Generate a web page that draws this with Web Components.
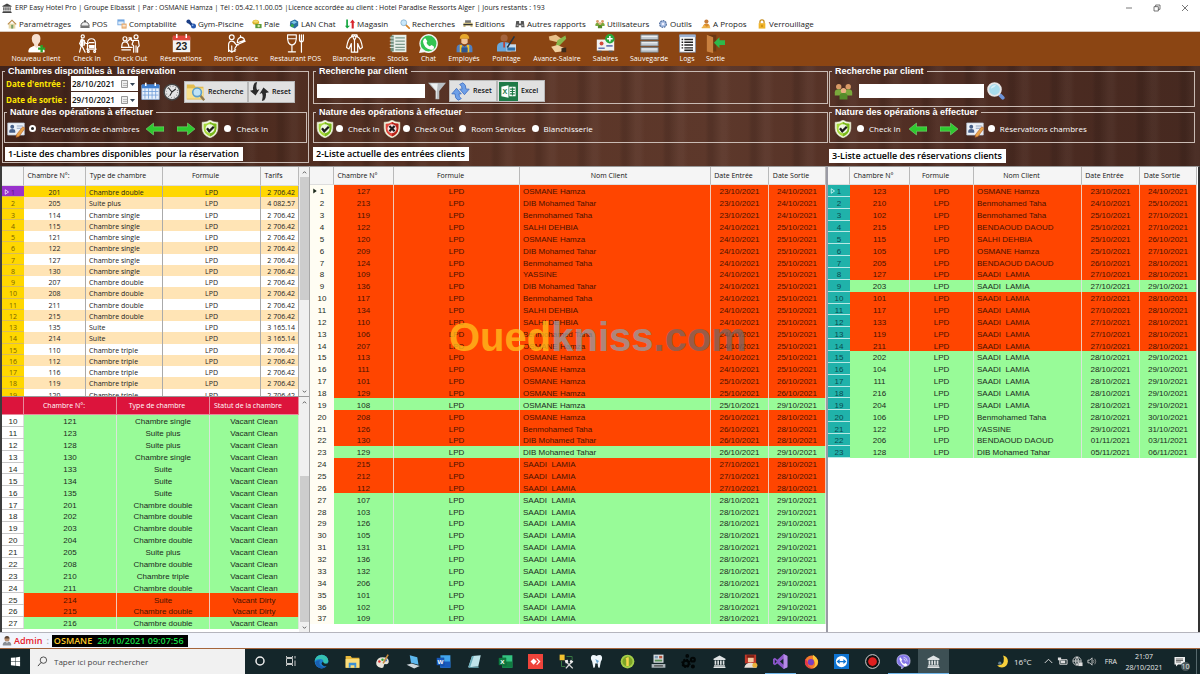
<!DOCTYPE html>
<html lang="fr">
<head>
<meta charset="utf-8">
<title>ERP Easy Hotel Pro</title>
<style>
html,body{margin:0;padding:0}
body{font:8px/12px "Open Sans","Noto Sans",sans-serif;color:#222;background:#fff}
</style>
</head>
<body>
<hotel-app></hotel-app>
<script>
const BASE = `<style>
*{box-sizing:border-box}
button{font:inherit;color:inherit;background:none;border:0;padding:0;margin:0}
input{font:inherit;color:inherit;margin:0}
</style>`;
function define(name, html, setup){
  customElements.define(name, class extends HTMLElement{
    connectedCallback(){
      if(this.shadowRoot) return;
      const r = this.attachShadow({mode:'open'});
      r.innerHTML = BASE + (typeof html === 'function' ? html(this) : html);
      if(setup) setup(this, r);
    }
  });
}

/* ---------- icons, 24 x 24 grid ---------- */
const bust = (x,y,c,h) => `<circle cx="${x}" cy="${y}" r="3.4" fill="${h}"/><path fill="${c}" d="M${x-5} ${y+11}v-4q0-4 5-4t5 4v4z"/>`;
const bank = c => `<path fill="${c}" d="M12 1 23 7v2H1V7zM3 10h3v8H3zM8 10h3v8H8zM13 10h3v8h-3zM18 10h3v8h-3zM2 19h20v2H2zM1 21.500h22V24H1z"/>`;
const line = 'fill="none" stroke="#fff" stroke-width="1.500" stroke-linecap="round" stroke-linejoin="round"';
const shield = (c1,c2,mark) => `<path fill="#f4f7e4" stroke="#d9e0c0" stroke-width=".7" d="M12 0q5 3.500 10.500 3v8q0 9-10.500 13Q1.500 20 1.500 11V3Q7 3.500 12 0z"/><path fill="${c1}" d="M12 2.500q4 2.500 8.500 2.500v6q0 7.500-8.500 11-8.500-3.500-8.500-11V5Q8 5 12 2.500z"/><path fill="${c2}" d="M12 2.500q4 2.500 8.500 2.500v6q0 7.500-8.500 11z"/><circle cx="12" cy="11.500" r="6" fill="#fff" opacity=".85"/>${mark}`;
const office = (c1,c2,l) => `<path fill="${c1}" d="M7 2h16v20H7z"/><path fill="${c2}" d="M7 12h16v10H7z"/><path fill="${c2}" stroke="#0003" d="M1 6h12v12H1z"/><text x="7" y="15.500" font-size="10" font-weight="700" text-anchor="middle" fill="#fff" font-family="Liberation Sans">${l}</text>`;
const ICONS = {
  bank: bank('#444'), bankW: bank('#dfe3e4'),
  home:`<path fill="#e8d9a8" d="M4 11h16v12H4z"/><path fill="#b98a4a" d="M12 1 1 12l2 2 9-9 9 9 2-2z"/><path fill="#7aa06a" d="M10 14h5v9h-5z"/>`,
  bell:`<path fill="#eee" stroke="#444" stroke-width="2" d="M2 17q1-10 10-10t10 10z"/><path fill="#444" d="M1 18h22v3H1zM10 3h4v4h-4z"/>`,
  compta:`<path fill="#6fa4e0" d="M1 1h17v14H1z"/><path fill="#dcebfa" d="M3 6h13v7H3z"/><path fill="#e7a25c" d="M11 11h12v12H11z"/><path fill="#fff" d="M13 14h8v2h-8zM13 18h8v2h-8z"/>`,
  gym:`<path stroke="#1c3f86" stroke-width="6" d="m6 6 12 12"/><circle cx="6" cy="6" r="5" fill="#1c3f86"/><circle cx="18" cy="17" r="6" fill="#2858ae"/><circle cx="16" cy="15" r="2" fill="#9fc0f0"/>`,
  paie:`<ellipse cx="9" cy="8" rx="8" ry="6" fill="#d8b22b"/><ellipse cx="9" cy="6" rx="6" ry="3" fill="#f4dc6b"/><path fill="#5c9a38" d="M8 12h15v10H8z"/><circle cx="16" cy="17" r="3" fill="#cfe7a8"/>`,
  lan:`<path fill="#2d6fa0" d="M3 6 14 1l8 5v10l-8 7L2 17z"/><path fill="#7ec8e8" d="m5 8 8-4 6 4-7 4z"/><circle cx="8" cy="16" r="4" fill="#38a94a"/>`,
  magasin:`<path fill="#12a53e" d="M7 1v15h5l-7 7-5-7h3V1z"/><path fill="#d8242c" d="M16 23V9h-4l6-8 6 8h-3v14z"/>`,
  loupe:`<path stroke="#d88428" stroke-width="4" stroke-linecap="round" d="m14 14 8 8"/><circle cx="9" cy="9" r="7" fill="#c9e8fb" stroke="#8ab2cf" stroke-width="2"/>`,
  printer:`<path fill="#777" d="M5 3h14v7H5z"/><path fill="#c9b97a" d="M1 9h22v10H1z"/><path fill="#333" d="M1 12h22v3H1z"/><path fill="#fff" d="M6 16h12v6H6z"/>`,
  rapports:`<path fill="#555" d="M3 5h7v6h4V5h7l2 15h-8v-5H9v5H1z"/><path fill="#aaa" d="M4 13h4v4H4zM16 13h4v4h-4z"/>`,
  users:bust(6,6,'#7aa83c','#d99a66')+bust(18,6,'#7aa83c','#d99a66')+bust(12,11,'#548c2a','#e8b080'),
  gear:`<circle cx="12" cy="12" r="8" fill="#8fa9d6" stroke="#54709f" stroke-width="3" stroke-dasharray="4 2"/><circle cx="12" cy="12" r="6" fill="#a9bfe2"/><circle cx="12" cy="12" r="3" fill="#eef"/>`,
  about:`<circle cx="13" cy="6" r="5" fill="#c67c3a"/><path fill="#d98a2b" d="M5 20q0-9 8-9t8 9z"/><path fill="#edb24a" d="M1 21 8 14l6 5 4-4 5 7H2z"/>`,
  lock:`<path fill="none" stroke="#c48a1a" stroke-width="3" d="M7 11V7q0-5 5-5t5 5v4"/><path fill="#f0b429" d="M4 10h16v13H4z"/><path fill="#a86c00" d="M11 14h2v5h-2z"/>`,
  newclient:`<path fill="#f6dfcf" d="M12 0q5 0 5 6 0 5-3 7v2q8 2 8 6v2H2v-2q0-4 7-6v-2Q6 11 6 6q0-6 6-6z"/><path fill="#fff" d="M2 23v-2q0-4 7-6l3 3 3-3q7 2 7 6v2z"/><path fill="#28a528" d="M17 14h3v3h3v3h-3v3h-3v-3h-3v-3h3z"/>`,
  checkin:`<g ${line}><circle cx="6" cy="3" r="2"/><path d="M5 6 2 12l2 3-2 8M5 15l4 8M6 7l4 5h3M8 8v6M12 20V12q0-6 5-6t5 6v8M11 19h12M14 15h6M14 11h6"/><circle cx="13" cy="22" r="1.200"/><circle cx="21" cy="22" r="1.200"/></g><path fill="#fff" d="M3 7h4v8H3zM14 14h7v4h-7z"/>`,
  checkout:`<g ${line}><circle cx="5" cy="6" r="2.500"/><circle cx="19" cy="3.500" r="2.500"/><path d="M1 16q0-6 4-6t5 6M0 17h14M16 23v-8l-2-2 2-5h6l1 7-2 2v6M19 15v8M7 10l5-4 3 3M10 5h3v3M1 20h11"/></g>`,
  cal23:`<path fill="#f3f3f3" d="M1 4h22v19H1z"/><path fill="#e2463c" d="M1 2h22v6H1z"/><path fill="#fff" d="M5 0h2v5H5zM17 0h2v5h-2z"/><text x="12" y="20.500" font-size="13" font-weight="700" text-anchor="middle" fill="#222" font-family="Liberation Sans">23</text>`,
  room:`<g ${line}><circle cx="6" cy="4" r="3"/><path d="M2 22v-8q0-5 4-5 3 0 5 4l3 1M6 22v-7M10 22v-4l2-3M12 14l11-5M13 11q0-6 5-7 4 1 4 4zM17 3V2M2 20l4 3 5-3"/></g>`,
  resto:`<g ${line}><path d="M2 1h11q1 12-5.500 13Q1 13 2 1zM7.500 14v8M3 22.500h9M3 6h9M17 1v6q0 3 2.500 3v13M22 1v6q0 3-2.500 3M19.500 1v8"/></g>`,
  laundry:`<g ${line}><path d="M9 1h6l1 3q4 1 6 13l-3 2-3-7v11H8V12l-3 7-3-2Q4 5 8 4zM9 2l3 6 3-6M12 8v14M10 4l2-2 2 2"/></g>`,
  stocks:`<path fill="#e9efe9" d="M4 1h18v22H4z"/><path fill="#6c8d7c" d="M2 2h4v20H2z"/><path stroke="#7c9a8c" stroke-width="1.500" d="M8 5h12M8 9h12M8 13h12M8 17h12M8 20h12"/><path stroke="#fff" stroke-width="1" d="M1 5h5M1 9h5M1 13h5M1 17h5"/>`,
  chat:`<path fill="#f4f4f4" d="M12 0a12 12 0 1 1-5 23L0 24l2-6A12 12 0 0 1 12 0z"/><circle cx="12" cy="12" r="10" fill="#33c452"/><path fill="#fff" d="M8 5.500 10.500 9 9.500 11.500q1.500 3 4 4L16 14l3 2q0 4-4 4Q6 18 5 9q1-3.500 3-3.500z"/>`,
  worker:`<path fill="#e7a72a" d="M6 6q0-6 6-6t6 6z"/><path fill="#efc59a" d="M8 6h8v5q-4 4-8 0z"/><path fill="#4f7fc0" d="M2 23v-5q0-5 6-5l4 3 4-3q6 0 6 5v5z"/><path fill="#f2c12e" d="M6 14h3v9H6zM15 14h3v9h-3z"/><path fill="#2e578f" d="M8 17h8v6H8z"/>`,
  pointage:`<circle cx="9" cy="5" r="4.500" fill="#a4633c"/><path fill="#67a7dc" d="M0 22v-6q0-6 9-6t9 6v6z"/><path fill="#c9dcec" d="M12 13h12v9H12z"/><path fill="#2c6fa8" d="M13 17h10v4H13z"/><path stroke="#234" stroke-width="2" d="M22 3 13 17"/><path fill="#c0392b" d="M8 10h2v7H8z"/>`,
  avance:`<path fill="#e8c08a" d="M1 3 10 1l7 5-6 4-9-2z"/><path fill="#87b84c" d="m12 8 10-6 1 4-9 9-5 2z"/><path fill="#f0d0a0" d="m4 16 8-2 9 4-4 4-8 1z"/><path fill="#3a2a1c" d="m17 18 6-1v6h-6z"/>`,
  salaires:`<path fill="#f2f2f2" d="M1 7h22v14H1z"/><circle cx="7" cy="12" r="2.500" fill="#d24a3c"/><path fill="#6878b8" d="M3 17h8v2H3zM13 14h8v2h-8z"/><path fill="#555" d="M2 21h5v2H2zM16 21h5v2h-5z"/><circle cx="17.500" cy="6" r="6" fill="#2aa83c"/><path fill="#fff" d="M16.500 2.500h2V5h2.500v2h-2.500v2.500h-2V7H14V5h2.500z"/>`,
  save:`<g fill="#c3cbd2" stroke="#6b7780"><path d="M1 1h22v6H1zM1 9h22v6H1zM1 17h22v6H1z"/></g><path stroke="#fff" d="M2 3h20M2 11h20M2 19h20"/>`,
  logs:`<path fill="#fff" stroke="#7b8ca5" d="M2 1h20v22H2z"/><path fill="#9db4d6" d="M2 1h20v3H2z"/><path stroke="#222" stroke-width="1.800" d="M8 7h11M8 10.500h11M8 14h11M8 17.500h11M8 20.500h11"/><path stroke="#222" stroke-width="1.800" d="M4.500 7h2M4.500 10.500h2M4.500 14h2M4.500 17.500h2"/>`,
  exit:`<path fill="#6b3812" d="M1 1h12v21H1z"/><path fill="#c9803e" d="m1 1 8 3v20l-8-2z"/><path fill="#2db84a" d="m10 11 7-7v4h7v6h-7v4z"/>`,
  calendar:`<path fill="#e8f0fb" stroke="#8fb0dc" d="M1 4h22v18H1z"/><path fill="#3f7fd0" d="M1 3h22v5H1z"/><path fill="#fff" d="M5 1h2v4H5zM17 1h2v4h-2z"/><path stroke="#6e9cd8" d="M5 8v13M9.500 8v13M14 8v13M18.500 8v13M2 12h20M2 16.500h20"/>`,
  clock:`<circle cx="12" cy="12" r="10.500" fill="#e4e4e4" stroke="#444" stroke-width="2"/><circle cx="12" cy="12" r="7.500" fill="none" stroke="#777" stroke-width="1.500" stroke-dasharray="1 2.930"/><path fill="none" stroke="#222" stroke-width="1.400" d="m7 6 5 6 5-4M12 12l-3 5"/>`,
  folder:`<path fill="#e3bd4e" d="M1 3h9l2 3h10v16H1z"/><path fill="#f7e08d" d="M1 8h21v13H1z"/><path stroke="#8f7a50" stroke-width="3" d="m18 17 5 6"/><circle cx="14" cy="13" r="5.500" fill="#bfe3f5" stroke="#5b9fcb" stroke-width="2"/>`,
  swap:`<path fill="#2b2b2b" d="M6 1 9 0q-2 7 0 10l3-1-5 8-7-6 4-1Q3 5 6 1zM18 23l-3 1q2-7 0-10l-3 1 5-8 7 6-4 1q1 5-2 9z"/>`,
  sync:`<path fill="#6fa0e8" stroke="#3d6cc0" d="M15 1q4 2 4 8h4l-6 7-6-7h3q0-4-3-6zM9 23q-4-2-4-8H1l6-7 6 7h-3q0 4 3 6z"/>`,
  funnel:`<path fill="#b9bec2" d="M0 1h24l-9 11v11h-5V12z"/><path fill="#eef0f1" d="M3 2h10l-1 9v11h-1V12z"/>`,
  excelb:`<path fill="#1f7a47" d="M0 0h24v24H0z"/><path fill="#fff" d="m3 6 9-2v16l-9-2zM13 6h8v12h-8z"/><text x="7.500" y="15.500" font-size="9" font-weight="700" text-anchor="middle" fill="#1f7a47" font-family="Liberation Sans">X</text><path stroke="#1f7a47" stroke-width="1.500" d="M14 9h6M14 12h6M14 15h6M17 7v10"/>`,
  magnify:`<path stroke="#6d93d8" stroke-width="5" stroke-linecap="round" d="m18 18 3 3"/><circle cx="10" cy="10" r="8.500" fill="#a8dcec" stroke="#e6e6e6" stroke-width="2.500"/><path fill="#fff" opacity=".6" d="M5 9q1-5 7-5-2 4-7 5z"/>`,
  card:`<path fill="#eef2f8" stroke="#bcc8d8" d="M1 4h22v16H1z"/><circle cx="7" cy="9" r="2.600" fill="#48618a"/><path fill="#48618a" d="M3 17v-2q0-3 4-3t4 3v2z"/><path stroke="#8ea4c4" stroke-width="1.500" d="M13 8h8M13 11h6"/><path fill="#e8a54a" stroke="#b05a2a" stroke-width=".8" d="m21 9 3 2-8 11-4 1 1-4z"/>`,
  left:`<path fill="#2fc92f" stroke="#8ff08f" stroke-width=".6" d="M0 12 10 4v5h14v6H10v5z"/>`,
  right:`<path fill="#2fc92f" stroke="#8ff08f" stroke-width=".6" d="M24 12 14 4v5H0v6h14v5z"/>`,
  ok:shield('#a6d83a','#79b81c','<path fill="none" stroke="#1b1b1b" stroke-width="3" d="m8 11 3 4 6-6"/>'),
  no:shield('#e0473c','#b52418','<path fill="none" stroke="#1b1b1b" stroke-width="3" d="m8.500 8 7 7m0-7-7 7"/>'),
  userS:`<circle cx="12" cy="7" r="6" fill="#b98d6a"/><path fill="#5a4636" d="M6 6q0-6 6-6t6 6z"/><path fill="#8a8f96" d="M2 23v-3q0-7 10-7t10 7v3z"/><path fill="#e0e0e0" d="m9 13 3 5 3-5z"/>`,
  win:`<path fill="#fff" d="m2 4 9-1v8.500H2zM12 3l10-1.500v10H12zM2 12.500h9V21l-9-1zM12 12.500h10v10L12 21z"/>`,
  find:`<circle cx="14" cy="9" r="7" fill="none" stroke="#333" stroke-width="1.800"/><path stroke="#333" stroke-width="2" d="m9 14-7 8"/>`,
  ring:`<circle cx="12" cy="12" r="8" fill="none" stroke="#eee" stroke-width="3"/>`,
  task:`<path fill="none" stroke="#ddd" stroke-width="1.800" d="M3 7h12v10H3zM3 2v3h12V2M3 22v-3h12v3M20 2v5M20 11v11"/>`,
  edge:`<circle cx="12" cy="12" r="11" fill="#1b7fd0"/><path fill="#35c1b0" d="M1 11Q3 1 13 1q9 1 10 10-1 5-7 5-3-1-1-4 0-4-5-4-6 0-9 3z"/><path fill="#1a5fb0" d="M2 13q3-4 8-3-3 4 0 8 4 4 10 2-6 5-12 2-5-3-6-9z"/><path fill="#142528" d="M14 12q3 6 10 2l-2 5q-8 2-10-4z"/>`,
  explorer:`<path fill="#e8b93c" d="M1 3h8l2 3h12v16H1z"/><path fill="#fbdd7a" d="M1 8h22v14H1z"/><path fill="#3b8fd4" d="M6 14h12v8h-3v-4H9v4H6z"/>`,
  paint:`<path fill="#e8e4da" d="M12 5q11 0 10 8-1 4-6 3-2 0-2 3 0 4-5 3Q1 20 2 13q2-8 10-8z"/><circle cx="7" cy="12" r="2" fill="#d33"/><circle cx="12" cy="9" r="2" fill="#3a3"/><circle cx="17" cy="10" r="2" fill="#36c"/><path stroke="#c98b3a" stroke-width="2.500" d="m21 1-8 14"/>`,
  pc:`<path fill="#5db8ee" d="m6 2 12 3 2 12-12-3z"/><path fill="#cfd8dc" d="m1 17 8-2 13 4-9 4z"/>`,
  word:office('#41a5ee','#185abd','W'), excel:office('#33c481','#107c41','X'),
  note:`<path fill="#bfe3ea" d="m8 3 14-1-4 18-16 1z"/><path fill="#6fb0bd" d="m2 21 16-1 1 2H4zM8 3l3 0-6 18H2z"/>`,
  anydesk:`<path fill="#ef443b" d="M0 0h24v24H0z"/><path fill="#fff" d="m9 7 5 5-5 5-5-5z"/><path fill="#fff" d="m13 7 2 0 5 5-5 5h-2l4-5z"/>`,
  tools:`<path fill="#f2c230" d="M1 1h8v9H1z"/><path fill="none" stroke="#3a7d44" stroke-width="1.500" d="M4 11v9h6M12 4h9v6"/><path stroke="#d8d8d8" stroke-width="2.200" d="m11 12 11 11M21 12 11 23"/><path fill="#eee" d="m9 10 5-1 1 4-4 2zM19 9l4 3-3 3-3-3z"/>`,
  tooth:`<path fill="#eef6fb" d="M5 2q4-1 7 1 3-2 7-1 4 4 0 10l-2 10q-3 1-3-7h-4q0 8-3 7L5 12Q1 6 5 2z"/><path fill="#6aa5d0" d="m10 8 6 3-3 4z"/>`,
  one:`<circle cx="12" cy="12" r="11" fill="#a5cf4a"/><circle cx="12" cy="12" r="8" fill="#7da428"/><path fill="#f6d64a" d="M9 7l3-2h2v14h-4V9z"/>`,
  server:`<path fill="#d8dde0" d="M4 1h16v13H4z"/><path fill="#7c9ab5" d="M6 3h5v4H6z"/><path fill="#b5543c" d="M13 3h5v4h-5z"/><path fill="#5b8f58" d="M6 9h12v3H6z"/><path fill="#aab3b8" d="M1 16h22v6H1z"/><path fill="#444" d="M5 18h14v2H5z"/>`,
  gears:`<g fill="none" stroke="#020606" stroke-width="3.500"><circle cx="8" cy="15" r="4.500"/><circle cx="8" cy="15" r="6.500" stroke-width="2" stroke-dasharray="2.500 2.600"/><circle cx="19" cy="9" r="3"/><circle cx="10" cy="3" r="1.200"/><circle cx="19" cy="20" r="1.500"/></g>`,
  person:`<path fill="#c0392b" d="M3 1h18v14H3z"/><path fill="#f2c9a0" d="M8 5h9v8H8z"/><path fill="#e8e0d8" d="M2 22q2-8 10-8t10 8z"/><circle cx="19" cy="18" r="4" fill="#e8b23a"/><path fill="#7a1f14" d="M6 2h12v4H6z"/>`,
  vs:`<path fill="#8a55c8" fill-rule="evenodd" d="m17 0 6 3v18l-6 3-10-9-4 3-3-2V8l3-2 4 3zM3 9v6l3-3zM17 7l-6 5 6 5z"/><path fill="#b58ae6" d="m17 0 6 3v18l-6 3z"/>`,
  firefox:`<circle cx="12" cy="13" r="10.500" fill="#f4792b"/><path fill="#fbc63a" d="M14 1q7 4 8.500 11-1 9-9 11 7-6 3-12-3-3-2.500-10z"/><circle cx="11" cy="13" r="5" fill="#7a3fc0"/><path fill="#e5344b" d="M2 7q-2 8 3 13 5 4 10 3-10-2-9-10z"/>`,
  team:`<path fill="#0e74d2" d="M0 0h24v24H0z"/><circle cx="12" cy="12" r="9" fill="#fff"/><path fill="#0e74d2" d="m4 12 5-4v3h6V8l5 4-5 4v-3H9v3z"/>`,
  rec:`<circle cx="12" cy="12" r="11" fill="#111" stroke="#ddd" stroke-width="1.500"/><circle cx="12" cy="12" r="7" fill="#e02020"/>`,
  viber:`<path fill="#8477e8" stroke="#dcd8ff" d="M12 1q10 0 10.500 9.500T13 20l-4 4v-4Q1 18 1.500 10 2 1 12 1z"/><path fill="#fff" d="m7 5 3 4-1.500 2q2 4 4.500 5l2-1.500 3.500 2.500q-2 3-4 2.500Q8 17 5.500 8q0-2 1.500-3z"/><path fill="none" stroke="#fff" d="M12 5q6 1 6 7M12 8q3 0 3 4"/>`,
  moon:`<path fill="#f6cf3c" d="M13 1q9 2 9 11-1 10-11 11-6 0-9-4 9 1 12-6 2-7-1-12z"/><circle cx="7" cy="15" r="3" fill="#8fb4d8" opacity=".6"/>`,
  chev:`<path fill="none" stroke="#ddd" stroke-width="2.500" d="m2 16 10-10 10 10"/>`,
  batt:`<path fill="none" stroke="#ddd" stroke-width="2" d="M6 8h16v10H6z"/><path fill="#ddd" d="M8 10h10v6H8zM2 3h7v6H2z"/>`,
  globe:`<g fill="none" stroke="#ddd" stroke-width="1.800"><circle cx="11" cy="11" r="9"/><path d="M2 11h18M11 2v18M11 2q-8 9 0 18M11 2q8 9 0 18"/></g><path fill="#ddd" d="M14 14h9v8h-9z"/>`,
  sound:`<path fill="none" stroke="#ddd" stroke-width="1.800" d="M2 9h4l5-5v16l-5-5H2z"/><path fill="none" stroke="#999" stroke-width="1.800" d="M14 9q2 3 0 6M17 6q4 6 0 12"/>`,
  notif:`<path fill="#eee" d="M1 2h21v15H8l-4 4v-4H1z"/><path stroke="#444" stroke-width="1.500" d="M4 6h14M4 9h14M4 12h10"/>`,
  min:`<path stroke="#333" stroke-width="2" d="M3 12h18"/>`,
  max:`<path fill="none" stroke="#333" stroke-width="2" d="M3 8h13v13H3zM8 8V3h13v13h-5"/>`,
  close:`<path stroke="#333" stroke-width="2" d="m3 3 18 18M21 3 3 21"/>`,
  play:`<path fill="currentColor" d="M5 2v20l14-10z"/>`,
  playo:`<path fill="none" stroke="currentColor" stroke-width="3" d="M5 3v18l13-9z"/>`,
  up:`<path fill="none" stroke="#444" stroke-width="4" d="m4 16 8-8 8 8"/>`,
  down:`<path fill="none" stroke="#444" stroke-width="4" d="m4 8 8 8 8-8"/>`
};
define('ui-icon', el => {
  const s = el.getAttribute('size') || 16;
  return `<style>:host{display:block;flex:none;width:${s}px;height:${s}px}svg{display:block;width:100%;height:100%}</style><svg viewBox="0 0 24 24" aria-hidden="true">${ICONS[el.getAttribute('name')]}</svg>`;
});

/* ---------- window chrome ---------- */
define('title-bar', `<style>
:host{display:flex;align-items:center;height:16px;padding:0 11px 0 2px;background:#fff;font-size:7px}
h1{flex:1;margin:0 0 0 3px;font:inherit;white-space:nowrap}
nav{display:flex;gap:20px}button{display:block}
</style><ui-icon name="bank" size="10"></ui-icon>
<h1>ERP Easy Hotel Pro | Groupe Elbassit | Par : OSMANE Hamza | Tél : 05.42.11.00.05 |Licence accordée au client : Hotel Paradise Ressorts Alger | Jours restants : 193</h1>
<nav><button aria-label="Réduire"><ui-icon name="min" size="8"></ui-icon></button><button aria-label="Restaurer"><ui-icon name="max" size="8"></ui-icon></button><button aria-label="Fermer"><ui-icon name="close" size="8"></ui-icon></button></nav>`);

const MENU = [['home','Paramétrages'],['bell','POS'],['compta','Comptabilité'],['gym','Gym-Piscine'],['paie','Paie'],['lan','LAN Chat'],['magasin','Magasin'],['loupe','Recherches'],['printer','Editions'],['rapports','Autres rapports'],['users','Utilisateurs'],['gear','Outils'],['about','A Propos'],['lock','Verrouillage']];
define('menu-bar', `<style>
:host{display:grid;grid-template-columns:73px 37px 69px 66px 37px 56px 55px 63px 52px 80px 63px 43px 56px auto;justify-content:start;align-items:center;height:16px;padding-left:7px;background:#fff;border-bottom:1px solid #d8c8bc}
button{display:flex;align-items:center;gap:2px;white-space:nowrap}
</style>${MENU.map(([i,t])=>`<button><ui-icon name="${i}" size="10"></ui-icon>${t}</button>`).join('')}`);

const TOOLS = [['newclient','Nouveau client'],['checkin','Check In'],['checkout','Check Out'],['cal23','Réservations'],['room','Room Service'],['resto','Restaurant POS'],['laundry','Blanchisserie'],['stocks','Stocks'],['chat','Chat'],['worker','Employés'],['pointage','Pointage'],['avance','Avance-Salaire'],['salaires','Salaires'],['save','Sauvegarde'],['logs','Logs'],['exit','Sortie']];
define('tool-bar', `<style>
:host{display:grid;grid-template-columns:62px 40px 47px 54px 56px 63px 54px 34px 27px 44px 41px 60px 37px 50px 26px 31px;height:34px;padding:2px 0 0 5px;background:#8b4513;color:#fff;font-size:7px;line-height:10px}
button{display:flex;flex-direction:column;align-items:center;white-space:nowrap}
ui-icon{margin-bottom:1px}
</style>${TOOLS.map(([i,t])=>`<button><ui-icon name="${i}" size="19"></ui-icon>${t}</button>`).join('')}`);

/* ---------- form pieces ---------- */
define('group-box', el => `<style>
:host{display:block}
fieldset{height:100%;min-width:0;margin:0;padding:0;border:1px solid #c9bbb4}
legend{margin-left:2px;padding:0 3px;font:bold 9px/10px "Liberation Sans",Arial,sans-serif;color:#fff;white-space:pre}
</style><fieldset><legend>${el.getAttribute('label')}</legend><slot></slot></fieldset>`);

define('radio-option', el => `<style>
:host{display:block}
label{display:flex;align-items:center;gap:5px;color:#fff;white-space:nowrap}
input{appearance:none;width:7px;height:7px;border-radius:50%;background:#fff}
input:checked{border:2px solid #fff;background:#222}
</style><label><input type="radio" name="op" ${el.hasAttribute('checked')?'checked':''}><span><slot></slot></span></label>`);

define('push-button', el => `<style>
:host{display:block}
button{display:flex;align-items:center;gap:3px;height:22px;padding:0 3px 0 1px;width:100%;background:#e1e1e1;border:1px solid #b8b8b8;font-size:7px;font-weight:600;color:#111}
</style><button><ui-icon name="${el.getAttribute('icon')}" size="19"></ui-icon><slot></slot></button>`);

define('date-field', el => `<style>
:host{display:block}
label{display:grid;grid-template-columns:65px 67px;align-items:center;color:#ffe600;font-weight:700;white-space:nowrap}
span{display:flex;align-items:center;height:15px;background:#fff;color:#111;padding-right:3px}
input{flex:1;min-width:0;border:0;padding:0 1px;background:none;font-weight:600}
svg{width:14px;height:8px;flex:none}
</style><label>${el.getAttribute('label')}<span><input value="${el.getAttribute('value')}"><svg viewBox="0 0 14 8"><path fill="#eee" stroke="#999" d="M.5.5h6v7h-6z"/><path stroke="#bbb" d="M2 3.500h4M2 5.500h4"/><path fill="#345" d="M9 3h5l-2.500 3z"/></svg></span></label>`);

define('list-title', `<style>
:host{display:block}
h2{display:inline-block;margin:0;height:14px;padding:0 4px 0 3px;background:#fff;color:#000;font:600 9px/13px "Open Sans",sans-serif;white-space:pre}
</style><h2><slot></slot></h2>`);

define('control-panels', `<style>
:host{display:grid;grid-template-columns:311fr 517fr 372fr;height:100px;
background:repeating-linear-gradient(90deg,#0000 0 17px,#0000001a 21px 24px,#ffffff08 34px 38px,#0000 43px),linear-gradient(90deg,#42241b 0,#4e2c20 22%,#5c3628 45%,#5d382b 60%,#4e2c22 80%,#462920 100%)}
section{display:flex;flex-direction:column;min-width:0}
.a{padding:0 2px}.b{padding:0 0 0 2px}.c{padding:0 5px 0 1px}
.a>group-box{height:97px}
.find{display:flex;align-items:center;height:31px;padding-left:3px}
.find div{display:grid;gap:1px;margin-right:3px}
.ops{display:flex;align-items:center;height:23px;padding-left:2px}
.in{margin:0 1px;height:36px}
.b .in,.c .in{margin:0}
.b .top{height:38px;margin-bottom:3px}
.b .top .find{height:28px;padding-top:2px}
.c .top{height:41px}
.c .find{height:30px;padding-left:4px}
.text{height:14px;border:0;background:#fff;padding:0 2px}
.a list-title{margin:4px 0 0 2px}.b list-title{margin-top:4px}.c list-title{margin-top:6px}
</style>
<section class="a"><group-box label="Chambres disponibles à  la réservation">
 <div class="find"><div><date-field label="Date d'entrée :" value="28/10/2021"></date-field><date-field label="Date de sortie :" value="29/10/2021"></date-field></div>
 <ui-icon name="calendar" size="19"></ui-icon><ui-icon name="clock" size="18" style="margin:0 3px"></ui-icon>
 <push-button icon="folder" style="width:64px">Recherche</push-button><push-button icon="swap" style="width:47px">Reset</push-button></div>
 <group-box class="in" label="Nature des opérations à effectuer"><div class="ops"><ui-icon name="card" size="18"></ui-icon><radio-option checked style="margin:0 7px 0 4px">Réservations de chambres</radio-option><ui-icon name="left" size="18"></ui-icon><ui-icon name="right" size="18" style="margin:0 6px 0 13px"></ui-icon><ui-icon name="ok" size="18"></ui-icon><radio-option style="margin-left:5px">Check In</radio-option></div></group-box>
 <list-title>1-Liste des chambres disponibles  pour la réservation</list-title>
</group-box></section>
<section class="b"><group-box class="top" label="Recherche par client"><div class="find"><input class="text" aria-label="Client" style="width:108px"><ui-icon name="funnel" size="18" style="margin:0 3px"></ui-icon><push-button icon="sync" style="width:48px">Reset</push-button><push-button icon="excelb" style="width:48px">Excel</push-button></div></group-box>
 <group-box class="in" label="Nature des opérations à effectuer"><div class="ops"><ui-icon name="ok" size="18"></ui-icon><radio-option style="margin:0 3px 0 2px">Check In</radio-option><ui-icon name="no" size="18"></ui-icon><radio-option style="margin:0 6px 0 2px">Check Out</radio-option><radio-option style="margin-right:6px">Room Services</radio-option><radio-option>Blanchisserie</radio-option></div></group-box>
 <list-title>2-Liste actuelle des entrées clients</list-title></section>
<section class="c"><group-box class="top" label="Recherche par client"><div class="find"><ui-icon name="users" size="19"></ui-icon><input class="text" aria-label="Client" style="width:125px;margin:0 3px 0 6px"><ui-icon name="magnify" size="18"></ui-icon></div></group-box>
 <group-box class="in" label="Nature des opérations à effectuer"><div class="ops" style="padding-left:4px"><ui-icon name="ok" size="18"></ui-icon><radio-option style="margin:0 8px 0 5px">Check In</radio-option><ui-icon name="left" size="18"></ui-icon><ui-icon name="right" size="18" style="margin:0 8px 0 13px"></ui-icon><ui-icon name="card" size="18"></ui-icon><radio-option style="margin-left:4px">Réservations chambres</radio-option></div></group-box>
 <list-title>3-Liste actuelle des réservations clients</list-title></section>`);

/* ---------- data ---------- */
const rooms = `201|Chambre double|2 706.42
205|Suite plus|4 082.57
114|Chambre single|2 706.42
115|Chambre single|2 706.42
121|Chambre single|2 706.42
122|Chambre single|2 706.42
127|Chambre single|2 706.42
130|Chambre single|2 706.42
207|Chambre double|2 706.42
208|Chambre double|2 706.42
211|Chambre double|2 706.42
215|Chambre double|2 706.42
135|Suite|3 165.14
214|Suite|3 165.14
110|Chambre triple|2 706.42
112|Chambre triple|2 706.42
116|Chambre triple|2 706.42
119|Chambre triple|2 706.42
120|Chambre triple|2 706.42`.split('\n').map(r=>r.split('|')).map(([n,t,p])=>[n,t,'LPD',p]);
const status = `121|Chambre single
123|Suite plus
128|Suite plus
130|Chambre single
133|Suite
134|Suite
135|Suite
201|Chambre double
202|Chambre double
203|Chambre double
204|Chambre double
205|Suite plus
208|Chambre double
210|Chambre triple
211|Chambre double
214|Suite
215|Chambre double
216|Chambre double`.split('\n').map((r,i)=>[...r.split('|'), i==15||i==16?'Vacant Dirty':'Vacant Clean']);
const NAMES = {O:'OSMANE Hamza',D:'DIB Mohamed Tahar',B:'Benmohamed Taha',S:'SALHI DEHBIA',Y:'YASSINE',L:'SAADI  LAMIA',N:'BENDAOUD DAOUD'};
const day = d => d.length > 2 ? d + '/2021' : d + '/10/2021';
const stays = s => s.trim().split(/\s+/).map(r => { const [n,c,a,b] = r.split(','); return [n,'LPD',NAMES[c],day(a),day(b)]; });
const entries = stays(`127,O,23,24 213,D,23,24 119,B,23,24 122,S,24,25 120,O,24,25 209,D,24,25 124,B,24,25 109,Y,24,25 136,D,24,25 117,B,24,25 134,S,24,25 110,S,24,25 106,B,24,25 207,O,24,25 113,O,24,25 111,O,24,25 101,O,25,26 129,O,25,26 108,O,25,29 208,O,26,28 126,B,26,28 130,D,26,28 129,D,26,29 215,L,27,28 212,L,27,28 112,L,27,28 107,L,28,29 103,L,28,29 126,L,28,29 105,L,28,29 131,L,28,29 136,L,28,29 132,L,28,29 206,L,28,29 101,L,28,29 102,L,28,29 109,L,28,29`);
const bookings = stays(`123,O,23,24 210,B,24,25 102,B,25,27 215,N,25,27 115,S,25,26 105,O,25,27 205,N,26,28 127,L,27,28 203,L,27,29 101,L,27,28 117,L,27,28 133,L,27,28 119,L,27,28 211,L,27,28 202,L,28,29 104,L,28,29 111,L,28,29 216,L,28,29 204,L,28,29 106,B,28,30 122,Y,29,31 206,N,01/11,03/11 128,D,05/11,06/11`);
const GRIDS = {
  rooms:{cols:[22,62,77,98,38],head:['Chambre N°:','Type de chambre','Formule','Tarifs'],rows:rooms,first:1,align:['c','l','c','r'],mark:'playo',height:233},
  status:{cols:[22,93,93,89],head:['Chambre N°:','Type de chambre','Statut de la chambre'],rows:status,first:10,align:['c','c','c'],red:i=>i==15||i==16,height:232},
  entries:{cols:[24,60,126,191,58,57],head:['Chambre N°','Formule','Nom Client','Date Entrée','Date Sortie'],rows:entries,first:1,align:['c','c','l','c','c'],red:i=>i<26&&i!=18&&i!=22,mark:'play',height:457},
  bookings:{cols:[22,60,64,108,58,57],head:['Chambre N°','Formule','Nom Client','Date Entrée','Date Sortie'],rows:bookings,first:1,align:['c','c','l','c','c'],red:i=>i<14&&i!=8,mark:'playo',height:291}
};
define('data-grid', el => {
  const k = el.getAttribute('kind'), g = GRIDS[k];
  return `<style>
:host{display:block;min-width:0}
table{width:100%;height:${g.height}px;table-layout:fixed;border-collapse:separate;border-spacing:0;font:8px/9px "Liberation Sans",Arial,sans-serif;color:#1c2a1c}
td,th{padding:0;white-space:pre;overflow:hidden}
tbody td,tbody th{padding-top:2px}
thead th{height:18px;font:7px/12px "Open Sans",sans-serif;color:#111;background:#f5f5f5;border-right:1px solid #b9b9b9;padding-right:12px;border-bottom:1px solid #ddd}
tbody th{position:relative;font-weight:400;text-align:center}
tbody th ui-icon{position:absolute;left:2px;top:3px}
tbody .c{text-align:center}tbody .l{text-align:left;padding-left:3px}tbody .r{text-align:right;padding-right:3px}
td{background:#98fb98;border-right:1px solid #d9e6d9}
.red td{background:#ff4500;color:#4a1200;border-right-color:#f3c9b8}
.entries tbody th{background:#fffdf3}
.bookings tbody th{background:#20b2aa;color:#0a4a50;box-shadow:inset 0 -1px #b8e8e4}
.bookings tbody ui-icon{color:#e8ffff}
.status thead th{background:#dc143c;color:#fff;border-color:#e88a9c}
.status tbody th{background:#fff;box-shadow:inset 0 -1px #c8c8c8,inset -1px 0 #ddd}
.rooms{font:7px/9px "Open Sans",sans-serif}
.rooms thead th{height:19px}
.rooms td{background:#fff;color:#222;border-right-color:#aaa}
.rooms tr:nth-child(even) td{background:#ffe4b5}
.rooms tbody tr:first-child td{background:#ffd700}
.rooms tbody th{background:#ffd700;color:#7a6200;box-shadow:inset 0 -1px #d8bc5a}
.rooms tbody tr:first-child th{background:#9932cc;color:#5a1080}
.rooms tbody ui-icon{color:#fff}
</style><table class="${k}"><colgroup>${g.cols.map(c=>`<col style="width:${c}px">`).join('')}</colgroup>
<thead><tr><th></th>${g.head.map(h=>`<th scope="col">${h}</th>`).join('')}</tr></thead>
<tbody>${g.rows.map((r,i)=>`<tr${g.red&&g.red(i)?' class="red"':''}><th scope="row">${i==0&&g.mark?`<ui-icon name="${g.mark}" size="6"></ui-icon>`:''}${i+g.first}</th>${r.map((c,j)=>`<td class="${g.align[j]}">${c}</td>`).join('')}</tr>`).join('')}</tbody></table>`;
});

define('scroll-track', el => `<style>
:host{display:grid;grid-template-rows:10px ${el.getAttribute('parts')} 10px;justify-items:center;align-items:center;width:10px;background:#f0f0f0}
i{background:#cdcdcd;width:9px;height:100%}
</style><ui-icon name="up" size="5"></ui-icon><b></b><i></i><b></b><ui-icon name="down" size="5"></ui-icon>`);

define('work-area', `<style>
:host{display:grid;grid-template-columns:310fr 518fr 372fr;background:#fff;border-bottom:1px solid #b5b5bd}
.left{display:grid;grid-template-rows:230px 236px;min-width:0;border-left:2px solid #3c3c3c;border-right:1px solid #a8a8a8}
.pane{display:grid;grid-template-columns:1fr 10px;grid-template-rows:100%;min-width:0;min-height:0;overflow:hidden;border-top:1px solid #999}
.mid{position:relative;min-width:0;border-top:1px solid #999;border-right:2px solid #9a9aa4}
.right{min-width:0;border-top:1px solid #999;padding-right:1px;border-right:2px solid #333}
.mark{position:absolute;left:139px;top:147px;font:700 40px/46px "Liberation Sans",Arial,sans-serif;pointer-events:none;opacity:.76;color:#ffc01c;white-space:nowrap}
.mark b{color:#969aa2}.mark i{font-style:normal;color:#78645f}
</style>
<div class="left"><div class="pane"><data-grid kind="rooms"></data-grid><scroll-track parts="0px 123fr 86fr"></scroll-track></div>
<div class="pane"><data-grid kind="status"></data-grid><scroll-track parts="69fr 147fr 0px"></scroll-track></div></div>
<div class="mid"><data-grid kind="entries"></data-grid><div class="mark">Oued<b>kniss</b><i>.com</i></div></div>
<div class="right"><data-grid kind="bookings"></data-grid></div>`);

define('status-bar', `<style>
:host{display:flex;align-items:center;height:16px;padding-left:2px;background:#f2f5fc;border-bottom:1px solid #a5653c;font-size:9px;font-weight:600;white-space:pre}
.admin{color:#e8202a;margin:0 4px 0 2px}
.sep{color:#aaa;margin-right:3px}
.who{background:#000;color:#ffc928;padding:0 4px 0 2px;line-height:12px}
.who b{font-weight:600;color:#16d944;margin-left:5px}
</style><ui-icon name="userS" size="10"></ui-icon><span class="admin">Admin</span><span class="sep">:</span><span class="who">OSMANE<b>28/10/2021 09:07:56</b></span>`);

const APPS = ['ring','task','edge','explorer','paint','pc','word','note','excel','anydesk','tools','tooth','one','server','gears','bankW','person','vs','firefox','team','rec','viber','bankW'];
define('task-bar', `<style>
:host{display:flex;height:25px;background:#14262a;color:#e8e8e8}
.start{width:30px;display:grid;place-items:center}
.search{display:flex;align-items:center;gap:6px;width:215px;background:#f1f1f1;padding-left:7px;color:#444}
.search input{flex:1;min-width:0;border:0;padding:0;background:none}
.search input::placeholder{color:#444;opacity:1}
.apps{display:grid;grid-template-columns:repeat(23,1fr);width:704px}
.apps button{display:grid;place-items:center;border-bottom:1px solid transparent}
.apps .run{border-color:#6fb6ea}
.apps .on{background:#3d5054}
.tray{display:flex;align-items:center;margin-left:auto;gap:4px;padding-right:3px}
.temp{margin:0 8px 0 1px}
.fra{font-size:7px;margin:0 3px}
time{font-size:7px;line-height:11px;text-align:center;width:40px}
.note{position:relative;display:block;margin:0 6px}
.note b{position:absolute;left:7px;top:6px;background:#4a575a;border-radius:6px;width:9px;font:7px/9px "Open Sans",sans-serif;text-align:center}
.end{width:1px;height:25px;background:#56686c}
</style><button class="start" aria-label="Démarrer"><ui-icon name="win" size="11"></ui-icon></button>
<label class="search"><ui-icon name="find" size="11"></ui-icon><input placeholder="Taper ici pour rechercher" aria-label="Taper ici pour rechercher"></label>
<div class="apps">${APPS.map((a,i)=>`<button aria-label="${a}" class="${i==22?'on run':i==17||i==21?'run':''}"><ui-icon name="${a}" size="${i<2?12:i==15||i==22?13:15}"></ui-icon></button>`).join('')}</div>
<div class="tray"><ui-icon name="moon" size="13"></ui-icon><span class="temp">16°C</span><ui-icon name="chev" size="9"></ui-icon><ui-icon name="batt" size="11"></ui-icon><ui-icon name="globe" size="11"></ui-icon><ui-icon name="sound" size="11"></ui-icon><span class="fra">FRA</span><time>21:07<br>28/10/2021</time><button class="note" aria-label="Notifications"><ui-icon name="notif" size="12"></ui-icon><b>10</b></button><span class="end"></span></div>`);

define('hotel-app', `<style>
:host{display:flex;flex-direction:column;min-height:100vh}
work-area{flex:1}
</style><title-bar></title-bar><menu-bar></menu-bar><tool-bar></tool-bar><control-panels></control-panels><work-area></work-area><status-bar></status-bar><task-bar></task-bar>`);
</script>
</body>
</html>
